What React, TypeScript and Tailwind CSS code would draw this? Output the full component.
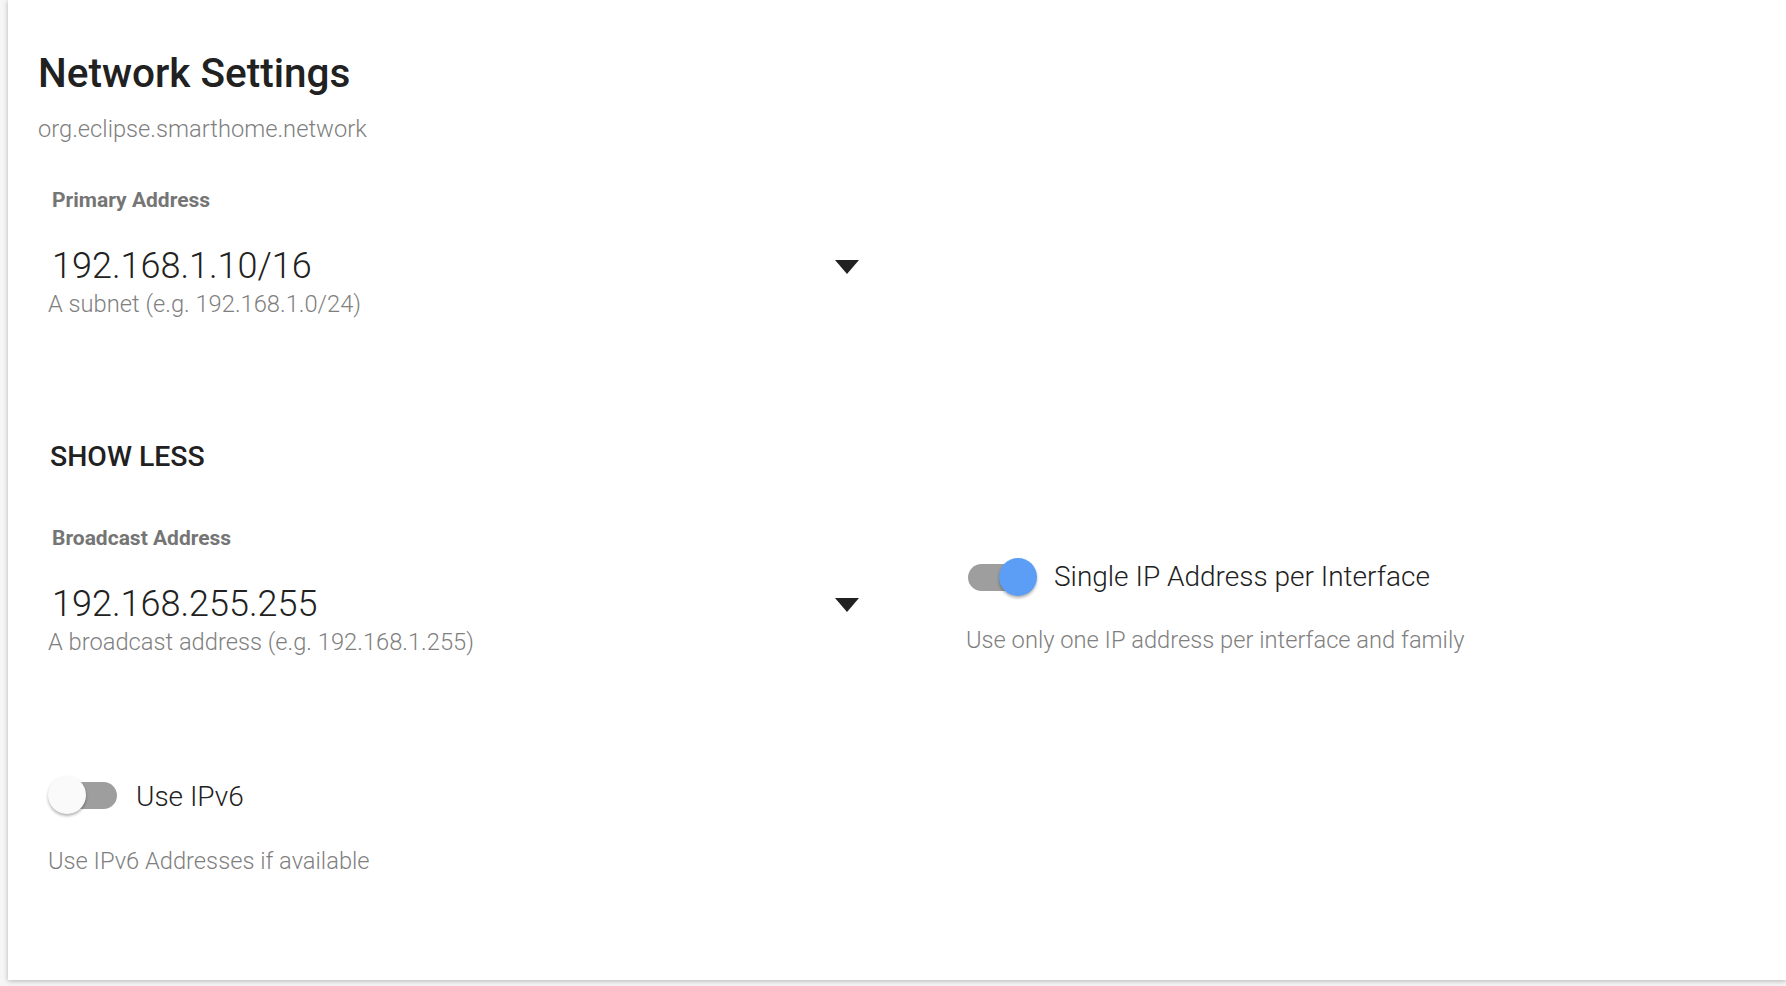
import React, { useState } from 'react';

interface ToggleProps {
  checked: boolean;
  onChange: (value: boolean) => void;
}

function Toggle({ checked, onChange }: ToggleProps) {
  return (
    <button
      type="button"
      onClick={() => onChange(!checked)}
      className="relative h-[38px] w-[69px] shrink-0"
    >
      <span
        className={`absolute top-[5.5px] h-[27px] w-[64px] rounded-full bg-[#9e9e9e] ${
          checked ? 'left-0' : 'left-[5px]'
        }`}
      />
      <span
        className={`absolute top-0 h-[38px] w-[38px] rounded-full shadow-[0_2px_3px_rgba(0,0,0,0.3)] ${
          checked ? 'left-[31px] bg-[#5c9df5]' : 'left-0 bg-[#fafafa]'
        }`}
      />
    </button>
  );
}

function SelectField({ label, value, helper }: { label: string; value: string; helper: string }) {
  return (
    <div className="flex flex-col">
      <div className="ml-1 text-[21px] leading-[24px] font-bold text-[#757575]">{label}</div>
      {/* Value row with dropdown arrow */}
      <div className="mt-[36px] ml-1 flex w-[807px] items-center justify-between">
        <span className="text-[36px] leading-[36px] font-light text-[#212121]">{value}</span>
        <svg width="24" height="14" viewBox="0 0 24 14" className="mt-[2px]">
          <polygon points="0,0 24,0 12,14" fill="#212121" />
        </svg>
      </div>
      <div className="mt-[8px] text-[23.7px] leading-[24px] font-light text-[#7f7f7f]">{helper}</div>
    </div>
  );
}

export default function App() {
  const [singleIp, setSingleIp] = useState(true);
  const [useIpv6, setUseIpv6] = useState(false);

  return (
    <div
      className="h-[986px] w-full overflow-hidden bg-[#f6f6f6] pl-2"
      style={{ fontFamily: 'Roboto, "Noto Sans", sans-serif' }}
    >
      <div className="h-[980px] bg-white pl-[30px] pt-[49px] shadow-[0_1px_5px_rgba(0,0,0,0.28)]">
        <h1 className="text-[40.5px] leading-[48px] font-medium text-[#212121]">Network Settings</h1>
        <div className="mt-[18px] text-[23.7px] leading-[28px] font-light text-[#7f7f7f]">
          org.eclipse.smarthome.network
        </div>

        <div className="ml-[10px] flex flex-col">
          <div className="mt-[45px]">
            <SelectField
              label="Primary Address"
              value="192.168.1.10/16"
              helper="A subnet (e.g. 192.168.1.0/24)"
            />
          </div>

          <button
            type="button"
            className="mt-[125px] ml-[2px] self-start text-[28.4px] leading-[32px] font-medium text-[#212121]"
          >
            SHOW LESS
          </button>

          <div className="mt-[53px] flex">
            <div className="w-[918px]">
              <SelectField
                label="Broadcast Address"
                value="192.168.255.255"
                helper="A broadcast address (e.g. 192.168.1.255)"
              />
            </div>
            <div className="flex flex-col pt-[32px]">
              <div className="flex items-center ml-[2px] gap-[17px]">
                <Toggle checked={singleIp} onChange={setSingleIp} />
                <span className="text-[28px] leading-[32px] font-light text-[#212121]">
                  Single IP Address per Interface
                </span>
              </div>
              <div className="mt-[30px] text-[23.7px] leading-[28px] font-light text-[#7f7f7f]">
                Use only one IP address per interface and family
              </div>
            </div>
          </div>

          <div className="mt-[122px] flex flex-col">
            <div className="flex items-center gap-[19px]">
              <Toggle checked={useIpv6} onChange={setUseIpv6} />
              <span className="mt-[4px] text-[28px] leading-[32px] font-light text-[#212121]">Use IPv6</span>
            </div>
            <div className="mt-[33px] text-[23.7px] leading-[28px] font-light text-[#7f7f7f]">
              Use IPv6 Addresses if available
            </div>
          </div>
        </div>
      </div>
    </div>
  );
}
